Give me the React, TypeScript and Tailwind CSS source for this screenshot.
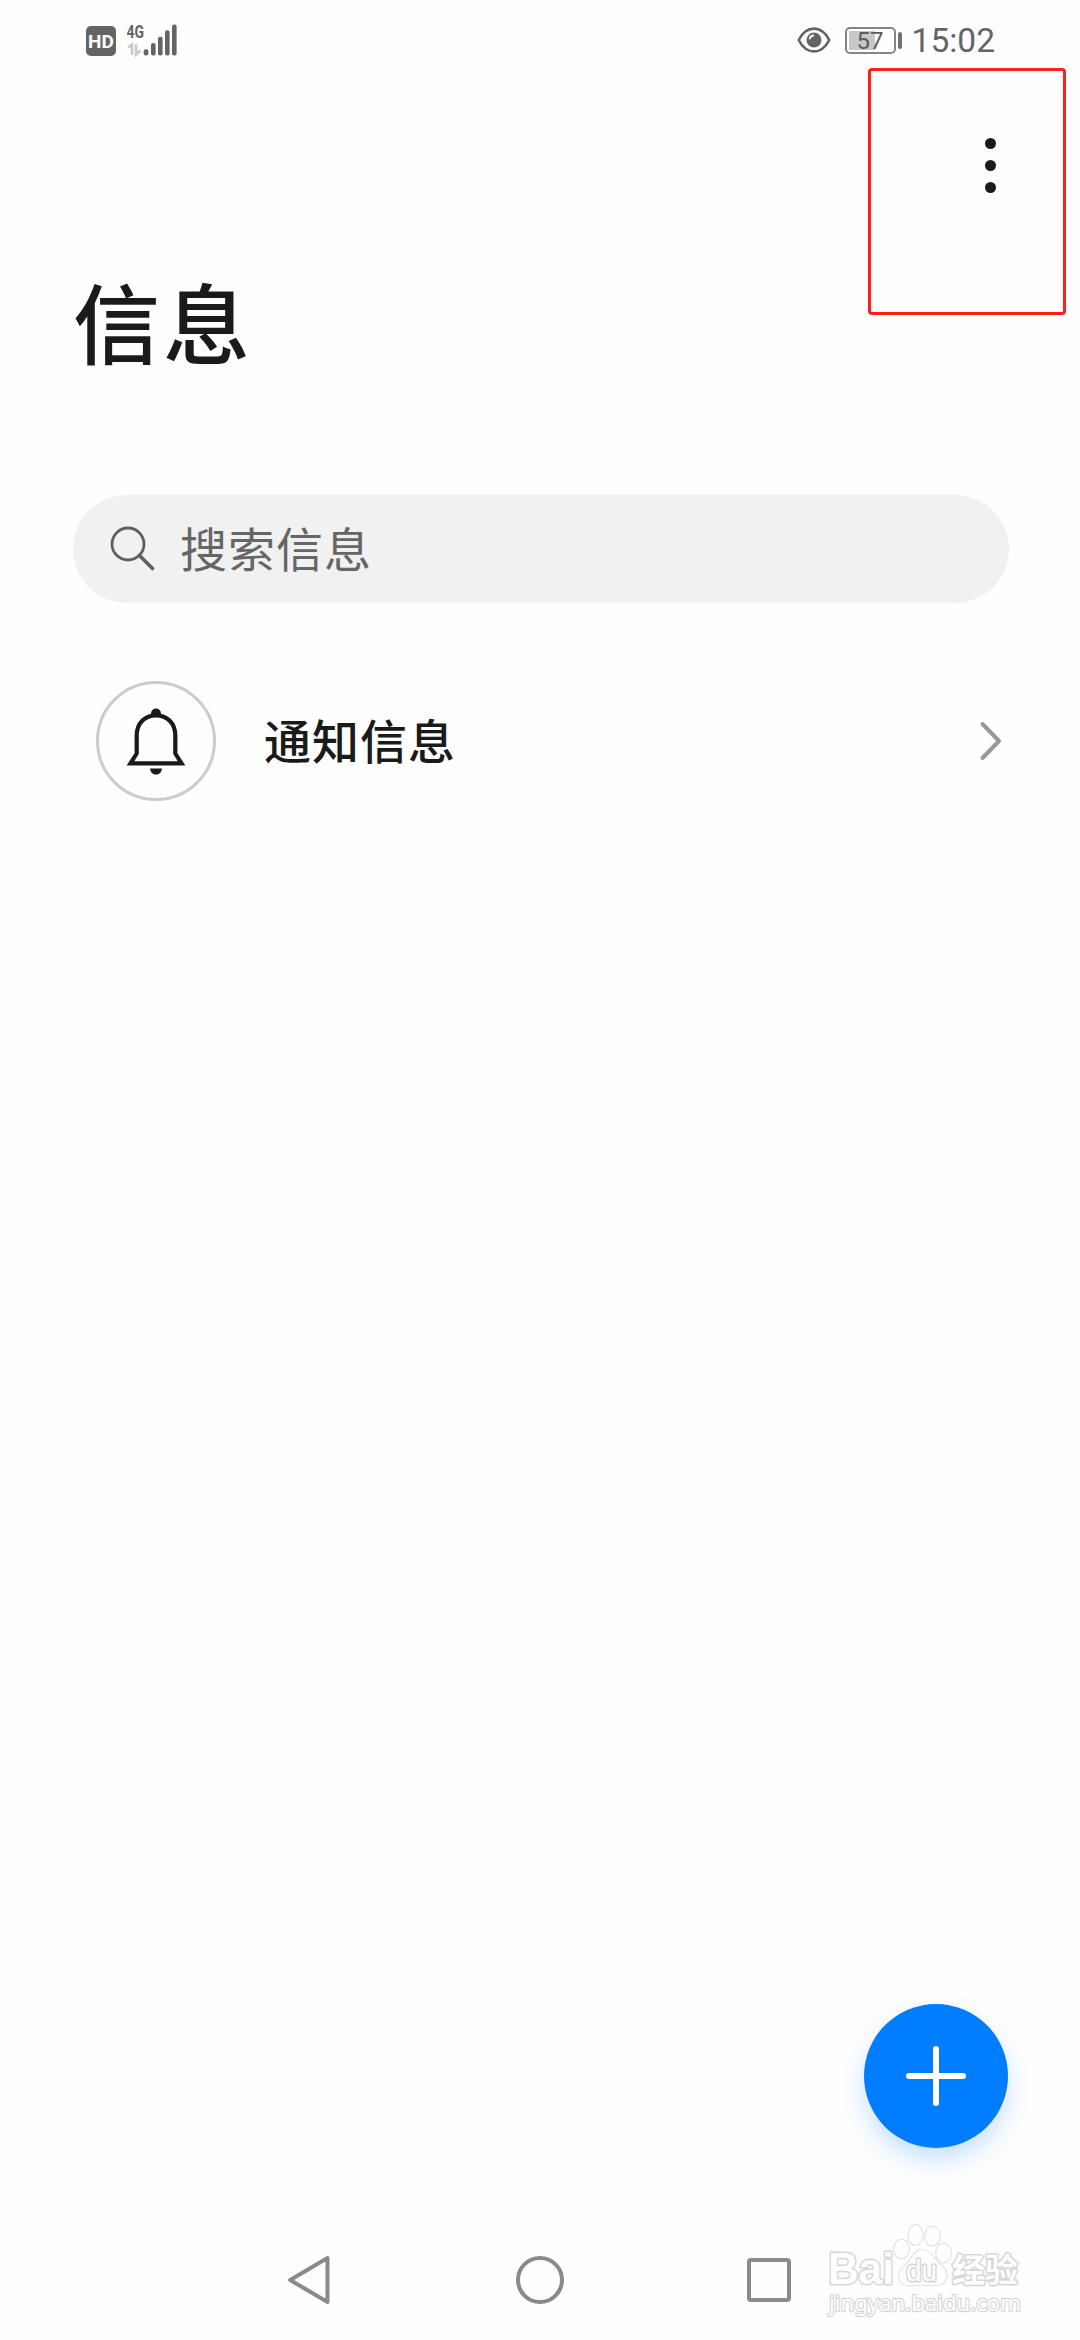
import React from "react";

const signalBars = [
  { x: 16.7, y: 27.2 },
  { x: 24, y: 21 },
  { x: 31, y: 14.8 },
  { x: 38, y: 8.2 },
  { x: 45, y: 2.5 },
];

function StatusBar() {
  return (
    <div className="h-[82px] pl-[86px] pr-[85px] flex justify-between items-start text-[#646464]">
      <div className="flex items-start pt-[22px]">
        <div className="mt-1 w-[30px] h-[30px] rounded-[5px] bg-[#646464] text-[#fefefe] flex items-center justify-center font-['Roboto'] text-[19px] leading-none font-bold">
          HD
        </div>
        <svg className="ml-[11px]" width="54" height="36" viewBox="0 0 54 36">
          <text x="-0.5" y="16" textLength="17.5" lengthAdjust="spacingAndGlyphs" fontFamily="Roboto, sans-serif" fontWeight="700" fontSize="18.5" fill="#646464">
            4G
          </text>
          <path d="M1 25.5L5 22.5V33" fill="none" stroke="#c8c8c8" strokeWidth="2.6" />
          <path d="M9 22.5V32.5L13.5 28.5" fill="none" stroke="#c8c8c8" strokeWidth="2.6" />
          {signalBars.map((bar) => (
            <rect key={bar.x} x={bar.x} y={bar.y} width="4.6" height={33.4 - bar.y} rx="2" fill="#646464" />
          ))}
        </svg>
      </div>

      <div className="flex items-start">
        {/* Eye comfort */}
        <svg className="mt-[26px]" width="34" height="28" viewBox="0 0 34 28" fill="none">
          <path d="M1.7 14C9.5 -1.2 24.5 -1.2 32.3 14C24.5 29.2 9.5 29.2 1.7 14Z" stroke="#646464" strokeWidth="2.6" strokeLinejoin="round" />
          <circle cx="17" cy="14" r="7.5" fill="#646464" />
          <path d="M12.8 12.6C13.2 10.8 14.4 9.8 16.2 9.5" stroke="#fefefe" strokeWidth="1.8" strokeLinecap="round" />
        </svg>
        {/* Battery */}
        <div className="ml-[14px] mt-[27px] w-[51px] h-[27px] rounded-[5px] border-2 border-[#858585] p-[2px] relative">
          <div className="w-[26px] h-[19px] bg-[#c8c8c8]" />
          <span className="absolute inset-0 flex items-center justify-center font-['Roboto'] text-[24px] leading-none text-[#5c5c5c]">
            57
          </span>
        </div>
        <div className="ml-[2px] mt-[32px] w-[4px] h-[17px] rounded-[2px] bg-[#707070]" />
        <span className="ml-[10px] mt-[21px] font-['Roboto'] text-[33.5px] leading-[40px]">15:02</span>
      </div>
    </div>
  );
}

function BellIcon() {
  return (
    <svg width="60" height="70" viewBox="0 0 60 70">
      <circle cx="30" cy="7.5" r="5" fill="#1a1a1a" />
      <path
        d="M4.5 57.3L10.7 47.5V29.5C10.7 17 19 9.3 30 9.3S49.3 17 49.3 29.5V47.5L55.5 57.3Z"
        fill="#fefefe"
        stroke="#1a1a1a"
        strokeWidth="4.2"
      />
      <path d="M24 62.5H36C35.5 66.4 33 68.6 30 68.6S24.5 66.4 24 62.5Z" fill="#1a1a1a" />
    </svg>
  );
}

function NavBar() {
  return (
    <div className="h-[120px] pl-[287px] pr-[289px] flex items-center justify-between">
      <svg width="46" height="52" viewBox="0 0 46 52" fill="none">
        <path d="M3.2 26L40.5 4V48Z" stroke="#8a8a8a" strokeWidth="4" strokeLinejoin="round" />
      </svg>
      <div className="w-12 h-12 rounded-full border-4 border-[#8a8a8a]" />
      <div className="w-[44px] h-[44px] rounded-[4px] border-4 border-[#8a8a8a]" />
    </div>
  );
}

function Watermark() {
  return (
    <svg className="absolute left-[820px] top-[2215px]" width="220" height="110" viewBox="0 0 220 110" fill="#fefefe" stroke="#d6d6d6" strokeWidth="3" strokeLinejoin="round" style={{ paintOrder: "stroke" }}>
      <text x="8" y="68.5" textLength="66" lengthAdjust="spacingAndGlyphs" fontFamily="Liberation Sans, sans-serif" fontWeight="700" fontSize="44">
        Bai
      </text>
      <g strokeWidth="1.5">
        <ellipse cx="81.5" cy="34" rx="7.5" ry="9.5" />
        <ellipse cx="95.5" cy="20" rx="7.2" ry="10" />
        <ellipse cx="112.5" cy="21" rx="7.5" ry="9.5" transform="rotate(8 112.5 21)" />
        <ellipse cx="123.5" cy="38" rx="7.5" ry="9.5" />
        <path d="M102 35C95 35 93 41 89 46C84 52 79 54 79 61C79 68 84 71 91 70.5C98 70 106 70 113 70.5C121 71 127 68 127 61C127 54 121 51 116 45C112 40 109 35 102 35Z" />
      </g>
      <text x="86" y="65.5" textLength="31" lengthAdjust="spacingAndGlyphs" fontFamily="Liberation Sans, sans-serif" fontSize="30">
        du
      </text>
      <text x="132" y="67" textLength="66" lengthAdjust="spacingAndGlyphs" fontFamily="Noto Sans CJK SC, sans-serif" fontWeight="700" fontSize="33">
        经验
      </text>
      <text x="9" y="96" textLength="192" lengthAdjust="spacingAndGlyphs" fontFamily="Noto Sans, sans-serif" fontSize="22" strokeWidth="2.4">
        jingyan.baidu.com
      </text>
    </svg>
  );
}

export default function App() {
  return (
    <div className="relative w-[1080px] h-[2340px] overflow-hidden flex flex-col bg-[#fefefe] text-[#1a1a1a] font-['Noto_Sans_CJK_SC',sans-serif]">
      <StatusBar />

      <div className="h-[166px] pr-[84px] flex items-center justify-end">
        <div className="flex flex-col gap-[11px]">
          <div className="w-[11px] h-[11px] rounded-full bg-[#1a1a1a]" />
          <div className="w-[11px] h-[11px] rounded-full bg-[#1a1a1a]" />
          <div className="w-[11px] h-[11px] rounded-full bg-[#1a1a1a]" />
        </div>
      </div>

      <h1 className="h-[158px] pl-[73px] text-[87px] leading-[144px] tracking-[3px] font-medium">信息</h1>

      {/* Search */}
      <div className="mt-[89px] ml-[73px] mr-[71px] h-[108px] rounded-full bg-[#f1f1f1] flex items-center pl-[36px]">
        <svg width="48" height="48" viewBox="0 0 48 48" fill="none" stroke="#606060">
          <circle cx="19" cy="19" r="16" strokeWidth="2.8" />
          <path d="M30.5 30.5L43.5 43.5" strokeWidth="3.6" strokeLinecap="round" />
        </svg>
        <span className="ml-[23px] pb-[5px] text-[47px] leading-[72px] tracking-[1px] text-[#666666]">搜索信息</span>
      </div>

      <div className="mt-[78px] pl-[96px] pr-[77px] h-[120px] flex items-center">
        <div className="w-[120px] h-[120px] rounded-full border-[3px] border-[#cccccc] flex items-center justify-center">
          <BellIcon />
        </div>
        <span className="ml-[48px] pb-[4px] text-[47px] leading-[72px] tracking-[1px] font-medium">通知信息</span>
        <svg className="ml-auto" width="24" height="42" viewBox="0 0 24 42" fill="none">
          <path d="M3.5 4L20 21L3.5 38" stroke="#999999" strokeWidth="4" strokeLinecap="round" strokeLinejoin="round" />
        </svg>
      </div>

      <div className="flex-1 flex items-end justify-end pr-[72px] pb-[72px]">
        <button className="w-[144px] h-[144px] rounded-full bg-[#007dff] flex items-center justify-center shadow-[0_12px_24px_rgba(0,125,255,0.22)]">
          <svg width="64" height="64" viewBox="0 0 64 64" stroke="#ffffff" strokeWidth="6" strokeLinecap="round">
            <path d="M5 32H59M32 5V59" />
          </svg>
        </button>
      </div>

      <NavBar />

      {/* Highlight around the menu button */}
      <div className="absolute left-[868px] top-[68px] w-[198px] h-[247px] rounded-[4px] border-[3px] border-[#ff2015]" />
      <Watermark />
    </div>
  );
}
